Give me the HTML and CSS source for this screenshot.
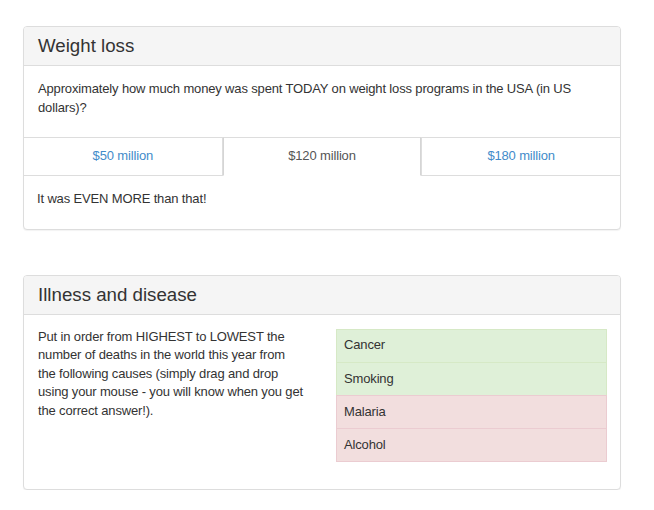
FILE: index.html
```html
<!DOCTYPE html>
<html lang="en">
<head>
<meta charset="utf-8">
<title>Quiz</title>
<link rel="stylesheet" href="styles.css">
</head>
<body>
<main class="page">
  <section class="panel">
    <div class="panel-heading"><h3 class="panel-title">Weight loss</h3></div>
    <div class="panel-body question">
      <p>Approximately how much money was spent TODAY on weight loss programs in the USA (in US dollars)?</p>
    </div>
    <div class="tabs">
      <a class="tab tab-first" href="#">$50 million</a>
      <span class="tab tab-active">$120 million</span>
      <a class="tab tab-last" href="#">$180 million</a>
    </div>
    <div class="panel-body feedback">
      <p>It was EVEN MORE than that!</p>
    </div>
  </section>

  <section class="panel">
    <div class="panel-heading"><h3 class="panel-title">Illness and disease</h3></div>
    <div class="panel-body order">
      <div class="col">
        <p>Put in order from HIGHEST to LOWEST the number of deaths in the world this year from the following causes (simply drag and drop using your mouse - you will know when you get the correct answer!).</p>
      </div>
      <div class="col">
        <ul class="list">
          <li class="item item-ok">Cancer</li>
          <li class="item item-ok">Smoking</li>
          <li class="item item-bad">Malaria</li>
          <li class="item item-bad">Alcohol</li>
        </ul>
      </div>
    </div>
  </section>
</main>
</body>
</html>
```
FILE: styles.css
```css
* { box-sizing: border-box; }

html, body {
  margin: 0;
  padding: 0;
  background: #fff;
}

body {
  font-family: "Liberation Sans", Arial, sans-serif;
  font-size: 13px;
  line-height: 18.57px;
  letter-spacing: -0.15px;
  color: #333;
}

p { margin: 0; }

.page {
  display: flex;
  flex-direction: column;
  gap: 45px;
  padding: 26px 0 0 23px;
  width: 621px;
}

.panel {
  border: 1px solid #ddd;
  border-radius: 4px;
  background: #fff;
  box-shadow: 0 1px 1px rgba(0, 0, 0, 0.05);
  overflow: hidden;
}

.panel-heading {
  background: #f5f5f5;
  border-bottom: 1px solid #ddd;
  padding: 9px 14px;
}

.panel-title {
  margin: 0;
  font-size: 18.7px;
  font-weight: normal;
  line-height: 20px;
  letter-spacing: 0;
  color: #333;
}

.panel-body {
  padding: 14px 14px 20px;
}

.tabs {
  display: grid;
  grid-template-columns: 1fr 1fr 1fr;
}

.tab {
  display: block;
  text-align: center;
  padding: 8px 10px 9px;
  line-height: 20px;
  border-top: 1px solid #ddd;
  border-bottom: 1px solid #ddd;
  color: #428bca;
  text-decoration: none;
}

.tab-first { border-right: 1px solid #ddd; }
.tab-last { border-left: 1px solid #ddd; }

.tab-active {
  color: #555;
  border-left: 1px solid #d5d5d5;
  border-right: 1px solid #d5d5d5;
  border-bottom-color: transparent;
}

.feedback {
  padding-left: 13px;
}

.order {
  display: grid;
  grid-template-columns: 265px 1fr;
  column-gap: 33px;
  padding: 13px 13px 27px 14px;
}

.list {
  list-style: none;
  margin: 1px 0 0;
  padding: 0;
}

.item {
  padding: 6.75px 7px;
  border: 1px solid;
  margin-bottom: -1px;
  color: #333;
}

.item:last-child { margin-bottom: 0; }

.item-ok {
  background: #dff0d8;
  border-color: #d6e9c6;
}

.item-bad {
  background: #f2dede;
  border-color: #ebccd1;
}
```
